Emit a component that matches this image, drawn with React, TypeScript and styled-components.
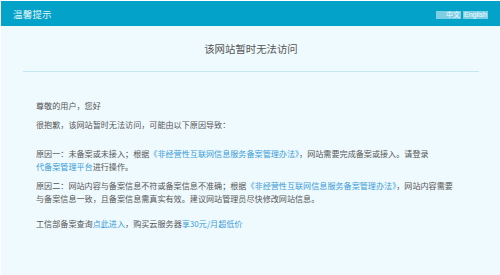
import React from 'react';
import styled, { createGlobalStyle } from 'styled-components';

const GlobalStyle = createGlobalStyle`
  html, body {
    margin: 0;
    padding: 0;
    background: #ffffff;
  }
  body {
    padding: 1px 0 0 1px;
    font-family: "Noto Sans CJK SC", "Liberation Sans", sans-serif;
  }
`;

const Page = styled.div`
  width: 499px;
  height: 274px;
  background: #effafe;
  overflow: hidden;
`;

const Header = styled.div`
  height: 25px;
  background: #03a2c8;
  display: flex;
  align-items: center;
  justify-content: space-between;
  padding: 0 12px 0 12px;
`;

const HeaderTitle = styled.span`
  color: #e4f6fb;
  font-size: 9.5px;
  letter-spacing: 0.2px;
`;

const LangBox = styled.div`
  display: flex;
  gap: 2px;
  margin-top: 2px;
`;

const LangBtn = styled.span`
  display: inline-block;
  width: 25px;
  box-sizing: border-box;
  background: #7fcfe4;
  color: #f2fbfe;
  font-family: "Liberation Sans", "Noto Sans CJK SC", sans-serif;
  font-size: 7px;
  line-height: 8px;
  height: 8px;
  padding: 0 1px;
  text-align: right;
`;

const Title = styled.div`
  margin: 0 21px 0 22px;
  padding: 16px 0 15px;
  border-bottom: 1px solid #c4e7f3;
  text-align: center;
  color: #555555;
  font-size: 10.4px;
  line-height: 14px;
`;

const Content = styled.div`
  padding: 27px 0 0 35px;
  color: #555555;
  font-size: 8.1px;
  line-height: 13px;
  white-space: nowrap;
`;

const Para = styled.p<{ $after?: number }>`
  margin: 0 0 ${(p) => p.$after ?? 6}px;
`;

const Link = styled.span`
  color: #3a9bd8;
`;

export default function App() {
  return (
    <>
      <GlobalStyle />
      <Page>
        <Header>
          <HeaderTitle>温馨提示</HeaderTitle>
          <LangBox>
            <LangBtn>中文</LangBtn>
            <LangBtn>English</LangBtn>
          </LangBox>
        </Header>
        <Title>该网站暂时无法访问</Title>
        <Content>
          <Para>尊敬的用户，您好</Para>
          <Para $after={16}>很抱歉，该网站暂时无法访问，可能由以下原因导致：</Para>
          <Para>
            原因一：未备案或未接入；根据<Link>《非经营性互联网信息服务备案管理办法》</Link>，网站需要完成备案或接入。请登录
            <br />
            <Link>代备案管理平台</Link>进行操作。
          </Para>
          <Para $after={12}>
            原因二：网站内容与备案信息不符或备案信息不准确；根据<Link>《非经营性互联网信息服务备案管理办法》</Link>，网站内容需要
            <br />
            与备案信息一致，且备案信息需真实有效。建议网站管理员尽快修改网站信息。
          </Para>
          <Para>
            工信部备案查询<Link>点此进入</Link>，购买云服务器<Link>享30元/月超低价</Link>
          </Para>
        </Content>
      </Page>
    </>
  );
}
